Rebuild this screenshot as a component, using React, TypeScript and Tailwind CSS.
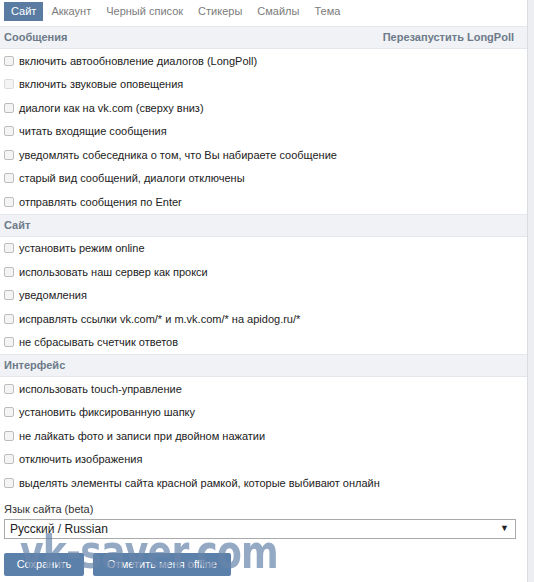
const tabs = ["Сайт", "Аккаунт", "Черный список", "Стикеры", "Смайлы", "Тема"];

const sections = [
  {
    title: "Сообщения",
    action: "Перезапустить LongPoll",
    items: [
      "включить автообновление диалогов (LongPoll)",
      "включить звуковые оповещения",
      "диалоги как на vk.com (сверху вниз)",
      "читать входящие сообщения",
      "уведомлять собеседника о том, что Вы набираете сообщение",
      "старый вид сообщений, диалоги отключены",
      "отправлять сообщения по Enter",
    ],
  },
  {
    title: "Сайт",
    items: [
      "установить режим online",
      "использовать наш сервер как прокси",
      "уведомления",
      "исправлять ссылки vk.com/* и m.vk.com/* на apidog.ru/*",
      "не сбрасывать счетчик ответов",
    ],
  },
  {
    title: "Интерфейс",
    items: [
      "использовать touch-управление",
      "установить фиксированную шапку",
      "не лайкать фото и записи при двойном нажатии",
      "отключить изображения",
      "выделять элементы сайта красной рамкой, которые выбивают онлайн",
    ],
  },
];

const Checkbox = ({ faded }: { faded?: boolean }) => (
  <span
    className={`inline-block size-[10px] rounded-[2px] border bg-[#f4f4f4] ${
      faded ? "border-[#dcdcdc]" : "border-[#bdbdbd]"
    }`}
  />
);

const App = () => {
  return (
    <div className="flex h-[582px] w-[534px] overflow-hidden bg-white font-['Liberation_Sans',Arial,sans-serif] text-[11px] text-[#222]">
      <div className="relative w-[527px]">
        {/* Tabs */}
        <div className="flex h-[26px] items-start gap-[1px] px-1 pt-[2px]">
          {tabs.map((t, i) => (
            <div
              key={t}
              className={`flex h-[19px] items-center px-[7px] text-[11px] ${
                i === 0 ? "bg-[#5a7ca3] text-white" : "text-[#7c7c7c]"
              }`}
            >
              {t}
            </div>
          ))}
        </div>

        {sections.map((s, si) => (
          <div key={s.title}>
            <div className="flex h-[23px] items-center justify-between border-y border-[#e4e7eb] bg-[#f0f2f5] px-1 text-[11px] font-bold text-[#6d7a89]">
              <span>{s.title}</span>
              {s.action && <span className="pr-[9px]">{s.action}</span>}
            </div>
            <div>
              {s.items.map((it, ii) => (
                <div key={it} className="flex h-[23.5px] items-center gap-[4px] pl-[4px]">
                  <Checkbox faded={si === 0 && ii === 1} />
                  <span className="pl-[1px]">{it}</span>
                </div>
              ))}
            </div>
          </div>
        ))}

        {/* Language */}
        <div className="px-1 pt-[8px]">
          <div className="mb-[3px] text-[11px] leading-[13px] text-[#333]">Язык сайта (beta)</div>
          <div className="flex h-[20px] w-[512px] items-center justify-between border border-[#a9a9a9] bg-white pl-[5px] pr-[6px] text-[12px] text-[#222]">
            <span>Русский / Russian</span>
            <span className="text-[9px] text-[#222]">▼</span>
          </div>
          <div className="mt-[14px] flex gap-[9px]">
            <button className="h-[23px] w-[80px] rounded-[2px] bg-[#5b80aa] text-[11px] text-white">
              Сохранить
            </button>
            <button className="h-[23px] w-[138px] rounded-[2px] bg-[#5b80aa] text-[11px] text-white">
              Отметить меня offline
            </button>
          </div>
        </div>

        {/* watermark */}
        <div className="pointer-events-none absolute left-[20px] top-[522px] origin-left scale-x-[0.77] font-['DejaVu_Sans',sans-serif] text-[47px] leading-[60px] font-bold tracking-[-1px] whitespace-nowrap text-[#6885ab] opacity-70 blur-[0.6px]">
          vk-saver.com
        </div>
      </div>
      <div className="w-[7px] border-l border-[#d9dde2] bg-[#eceef1]" />
    </div>
  );
};

export default App;
